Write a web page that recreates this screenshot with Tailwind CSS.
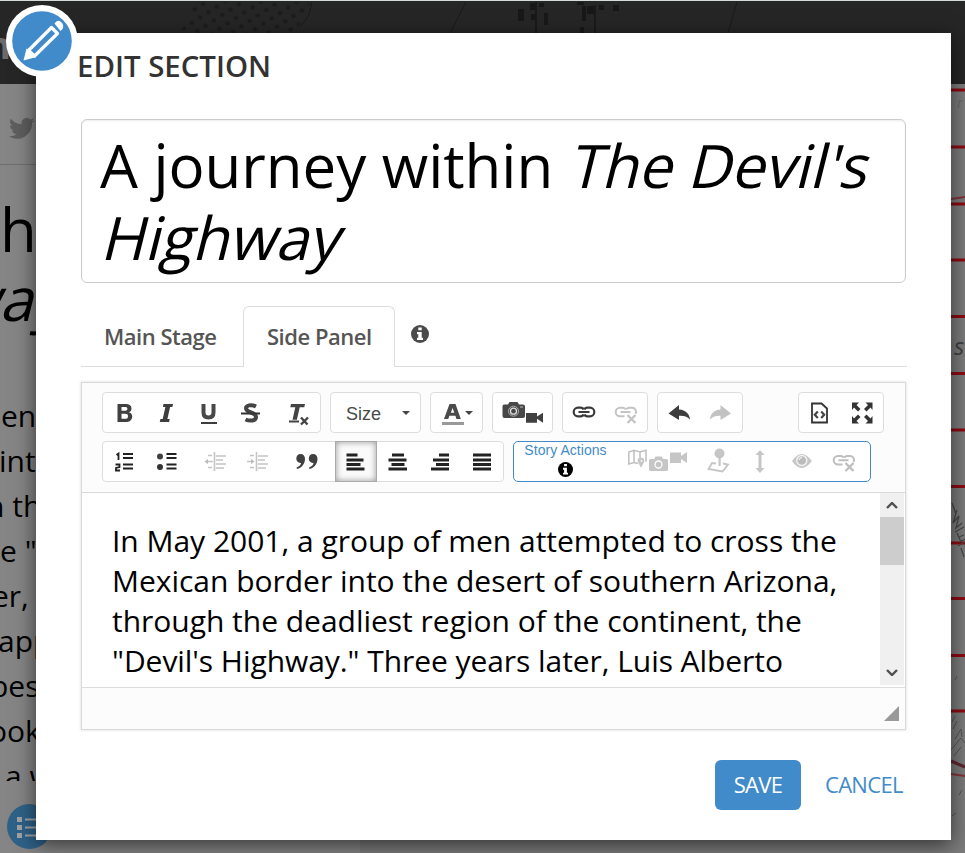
<!DOCTYPE html>
<html lang="en">
<head>
<meta charset="utf-8">
<title>Edit Section</title>
<script src="https://cdn.jsdelivr.net/npm/@tailwindcss/browser@4"></script>
</head>
<body class="relative h-[853px] w-[965px] overflow-hidden bg-[#858585] font-['Open_Sans',sans-serif]">

<!-- Dimmed page behind the dialog -->
<div class="flex h-[853px] flex-col overflow-hidden" aria-hidden="true">
  <header class="h-[84px] shrink-0 overflow-hidden border-t border-[#d5dcd9] bg-[#262626]">
    <svg class="block" width="965" height="83" viewBox="0 1 965 83">
      <defs><pattern id="dots" width="14" height="14" patternUnits="userSpaceOnUse" patternTransform="rotate(12)"><circle cx="3.5" cy="3.5" r="2.300" fill="#1c1c1c"/><circle cx="10.5" cy="10.5" r="2.300" fill="#1c1c1c"/></pattern></defs>
      <path d="M195 2H311L302 17L296 33H180Z" fill="url(#dots)"/>
      <g stroke="#1a1a1a" fill="none"><path d="M466 2L450 33M737 2L728 33M312 2L309 15L300 27"/><path stroke-width="2" d="M536 2V33M595 5V33"/></g>
      <path fill="#181818" d="M518 9h6v12h-6zM530 3h5v7h-5zM539 3h5v4h-5zM531 14h5v6h-5zM544 13h4v12h-4zM577 2h7v3h-7zM582 6h4v15h-4zM587 6h7v8h-7zM599 5h5v5h-5zM613 5h6v6h-6zM580 27h4v6h-4z"/>
    </svg>
    <div class="-mt-[72px] ml-[-14px] text-[38px] leading-[64px] font-bold text-[#6b6b6b]">n</div>
  </header>
  <div class="flex flex-1 overflow-hidden">
    <aside class="flex w-[360px] shrink-0 flex-col overflow-hidden bg-[#858585] text-black">
      <div class="flex h-[81px] shrink-0 items-center border-b border-[#6e6e6e] pl-[9px]">
        <svg width="26" height="26" viewBox="0 0 24 24" class="mt-[8px]"><path fill="#5e5e5e" d="M23.6 4.9a9.6 9.6 0 0 1-2.8.8 4.8 4.8 0 0 0 2.1-2.7 9.700 9.700 0 0 1-3 1.200 4.800 4.800 0 0 0-8.200 4.400A13.700 13.700 0 0 1 1.700 3.500a4.800 4.800 0 0 0 1.500 6.500 4.800 4.800 0 0 1-2.200-.6 4.800 4.800 0 0 0 3.900 4.800 4.800 4.800 0 0 1-2.200.1 4.800 4.800 0 0 0 4.500 3.300A9.700 9.700 0 0 1 0 19.600 13.700 13.700 0 0 0 21.200 7.400a9.800 9.800 0 0 0 2.400-2.500z"/></svg>
      </div>
      <div class="flex h-[229px] shrink-0 flex-col items-start pt-[29px] text-[60px] leading-[72px] whitespace-nowrap">
        <span class="-mt-px ml-0">h</span>
        <span class="-mt-[3px] ml-[-46px] inline-block origin-[0_75%] -skew-x-[14deg]">way</span>
      </div>
      <div class="-mt-px flex h-[388px] shrink-0 flex-col items-start overflow-hidden text-[30px] leading-[45px] whitespace-nowrap">
        <span class="ml-px">en</span><span class="ml-[-1px]">int</span><span class="ml-[-14px]">h th</span><span>e "</span><span class="ml-[-8px]">er,</span><span class="ml-[-2px]">app</span><span class="ml-[-10px]">bes</span><span class="ml-[-11px]">ook</span><span class="ml-[5px]">a w</span>
      </div>
      <svg class="mt-[23px] ml-[7px] shrink-0" width="46" height="46" viewBox="0 0 46 46"><circle cx="22.500" cy="22.500" r="22.500" fill="#2f6288"/><path fill="#a1a4a6" d="M10 13h5v5h-5zM10 21h5v5h-5zM10 29h5v5h-5zM18 14.500h17v2H18zM18 22.500h17v2H18zM18 30.500h17v2H18z"/></svg>
    </aside>
    <div class="flex flex-1 justify-end bg-[#7c7c7c]">
      <svg width="45" height="769" viewBox="920 84 45 769">
        <path fill="#7c7c7c" d="M920 84h45v769h-45z"/>
        <path stroke="#8c0b13" stroke-width="3" fill="none" d="M920 90h45M920 147h45M920 204h45M920 260h45M920 316.500h45M920 373.500h45M920 430h45M920 486.500h45M920 543h45M920 598.500h45M920 655.500h45M920 711h45"/>
        <path stroke="#82343b" stroke-width="2" fill="none" d="M951 199l14-2M951 774q7 1 14 2"/>
        <path stroke="#5d2730" stroke-width="3" d="M951 761l14 6"/>
        <path stroke="#484848" stroke-width="1.300" fill="none" d="M952 503l4 11M957 510l-4 13 6-7-3 12 6-5M955 532l9-5M957 533l4 9M959 537l5-2M961 541l5-2M958 546l7-4M961 548l3 9"/>
        <path stroke="#555" fill="none" d="M952 722l3-6M953 729l4-8M955 739l6-10 1 8M951 750l10-12 4 5M954 756l7-9M955 680l2-4M952 816l4-3M959 795l3-5"/>
        <text x="954" y="355" font-size="24" font-style="italic" fill="#404040" font-family="Open Sans">s</text>
        <text x="957" y="108" font-size="15" font-style="italic" fill="#626c70" font-family="Open Sans">r</text>
      </svg>
    </div>
  </div>
</div>

<!-- Dialog -->
<main class="absolute top-[33px] left-[36px] flex h-[807px] w-[915px] flex-col bg-white pr-[45px] pl-[45px] shadow-[0_5px_20px_rgba(0,0,0,0.6)]">
  <h1 class="-ml-[4px] h-[86px] shrink-0 pt-[15px] text-[29.4px] leading-[37px] font-semibold whitespace-nowrap text-[#333]">EDIT SECTION</h1>

  <div class="h-[164px] w-[825px] shrink-0 rounded-[6px] border border-[#ccc] pt-[9px] pl-[18px] text-[60px] leading-[72px] tracking-[-0.05px] whitespace-nowrap text-black shadow-[inset_0_1px_2px_rgba(0,0,0,0.08)]">
    <div>A journey within <span class="inline-block origin-[0_75%] -skew-x-[14deg]">The Devil's</span></div>
    <div class="pl-px"><span class="inline-block origin-[0_75%] -skew-x-[14deg]">Highway</span></div>
  </div>

  <!-- Tabs -->
  <nav class="mt-[23px] flex h-[61px] w-[826px] shrink-0 border-b border-[#ddd] text-[22px] leading-[60px] font-semibold tracking-[-0.48px] text-[#555]">
    <div class="w-[162px] pl-[23px] whitespace-nowrap">Main Stage</div>
    <div class="h-[61px] w-[152px] rounded-t-[6px] border border-b-0 border-[#ddd] bg-white pl-[23px] leading-[58px] whitespace-nowrap">Side Panel</div>
    <svg class="mt-[19px] ml-[16px]" width="18" height="18" viewBox="0 0 18 18"><circle cx="9" cy="9" r="9" fill="#4b4b4b"/><path fill="#fff" d="M7.300 2.500h3.400v2.700H7.300zM6 7h4.700v5.800H12V15H6v-2.200h1.300V9.200H6z"/></svg>
  </nav>

  <!-- Editor -->
  <section class="mt-[15px] flex h-[348px] w-[825px] shrink-0 flex-col border border-[#d9d9d9] bg-white shadow-[0_0_3px_rgba(0,0,0,0.15)]">
    <div class="flex h-[110px] shrink-0 flex-col gap-[8px] border-b border-[#d9d9d9] bg-[#fcfcfc] pt-[9px] pl-[20px] font-['Liberation_Sans',sans-serif]">
      <div class="flex gap-[9px]">
        <div class="flex h-[41px] w-[219px] rounded-[4px] border border-[#ddd] bg-white">
          <svg width="217" height="39" viewBox="103 393 217 39">
            <path fill="#404040" fill-rule="evenodd" d="M117.500 404h8c4 0 6 1.500 6 4.500 0 2-1 3.300-2.800 3.800 2.300.5 3.500 2 3.500 4.200 0 3.500-2.500 5.500-6.500 5.500h-8.200zM121.500 407v3.800h3.300c1.700 0 2.600-.6 2.600-2s-.9-1.800-2.700-1.800zM121.500 413.800v5h3.600c1.900 0 2.900-.8 2.900-2.600 0-1.600-1-2.400-3-2.400z"/>
            <path fill="#3d3d3d" d="M163.500 404h9.500l-.6 3h-2.300l-2.700 12h2.300l-.6 3h-9.300l.6-3h2.300l2.700-12h-2.500z"/>
            <path fill="none" stroke="#484848" stroke-width="4" d="M203.500 404v8.500q0 5 5 5t5-5V404"/>
            <path fill="#3d3d3d" d="M201 422h16v2h-16z"/>
            <path fill="none" stroke="#444" stroke-width="4" d="M256 406.500c-5-2.500-10-1-10 1.800 0 5 10 3.400 10 8.600 0 4-6 4.500-10.500 2.600"/>
            <path fill="#333" d="M241 412.500h19v2h-19z"/>
            <path fill="#444" d="M291 404h14l-.7 3.200h-4.600l-2.800 12.500h-4.400l2.800-12.500h-5zM289 420.500h10v2h-10z"/>
            <path fill="none" stroke="#444" stroke-width="2.400" d="M301 417.500l6.500 7M308 417.500l-7 7"/>
          </svg>
        </div>
        <div class="flex h-[41px] w-[91px] items-center justify-between rounded-[4px] border border-[#ddd] bg-white pr-[10px] pl-[15px] text-[18px] text-[#484848]"><span class="pt-[3px]">Size</span>
          <svg width="8" height="4" viewBox="0 0 8 4"><path fill="#444" d="M0 0h8L4 4z"/></svg></div>
        <div class="flex h-[41px] w-[53px] rounded-[4px] border border-[#ddd] bg-white">
          <svg width="51" height="39" viewBox="431 393 51 39"><path fill="#4b4b4b" fill-rule="evenodd" d="M449.500 404h6l5.300 15h-4.400l-1-3.200h-6l-1.200 3.200h-4.200zM452.600 408l-1.800 4.800h3.500z"/><path fill="#999" d="M442 422h22v3h-22z"/><path fill="#444" d="M465 411h8l-4 4z"/></svg>
        </div>
        <div class="flex h-[41px] w-[61px] rounded-[4px] border border-[#ddd] bg-white">
          <svg width="59" height="39" viewBox="493 393 59 39"><path fill="#474747" d="M504 404.500h4l1.500-2.500h8l1.500 2.500h4q2 0 2 2v9.500q0 2-2 2h-18.500q-2 0-2-2v-9.500q0-2 1.500-2z"/><circle cx="513.500" cy="411.200" r="5" fill="none" stroke="#aaa" stroke-width="1"/><circle cx="513.500" cy="411.200" r="3" fill="none" stroke="#ddd" stroke-width="1.300"/><path stroke="#bbb" d="M520 407h3"/><path fill="#404040" d="M526 413h11v3.500l6-3.800v10l-6-4v4h-11z"/></svg>
        </div>
        <div class="flex h-[41px] w-[86px] rounded-[4px] border border-[#ddd] bg-white">
          <svg width="84" height="39" viewBox="563 393 84 39">
            <g fill="none" stroke="#3a3a3a" stroke-width="2.200"><path d="M583.500 409.600q-.5-1.900-3-1.900H578a4.100 4.100 0 0 0 0 8.600h2.500q2.500 0 3-1.900M584.500 409.600q.5-1.900 3-1.900h2.500a4.100 4.100 0 0 1 0 8.600h-2.500q-2.500 0-3-1.900M578.500 412h11"/></g>
            <g fill="none" stroke="#c4c4c4" stroke-width="2"><path d="M625.500 409.600q-.5-1.900-3-1.900H620a4.100 4.100 0 0 0 0 8.600h4.500M626.500 409.600q.5-1.900 3-1.900h2.500a4 4 0 0 1 3.500 6M620.500 412h10"/><path stroke-width="2.400" d="M627.500 415l8 8M635.500 415l-8 8"/></g>
          </svg>
        </div>
        <div class="flex h-[41px] w-[86px] rounded-[4px] border border-[#ddd] bg-white">
          <svg width="84" height="39" viewBox="658 393 84 39"><path fill="#3d3d3d" d="M668.500 413.500l10.500-8.500v4.500c7 .5 10.500 4.500 11 10-3-3.200-6-4-11-3.800v4.300z"/><path fill="#c2c2c2" d="M731 413.500l-10.500-8.500v4.500c-7 .5-10 4.500-10.500 10 3-3.200 6-4 10.500-3.800v4.300z"/></svg>
        </div>
        <div class="ml-[46px] flex h-[41px] w-[86px] rounded-[4px] border border-[#ddd] bg-white">
          <svg width="84" height="39" viewBox="799 393 84 39"><path fill="#fff" stroke="#333" stroke-width="1.800" d="M812 403.500h9.500l5.500 5v14h-15z"/><path fill="none" stroke="#444" stroke-width="2.200" d="M817.800 411.500l-3 3.200 3 3.300M821.200 411.500l3 3.200-3 3.300"/>
            <g fill="#333"><path d="M852 402.500h7l-2.500 2.500 4 4-2.500 2.500-4-4-2 2.500zM872.500 402.500h-7l2.500 2.500-4 4 2.500 2.500 4-4 2 2.500zM852 423.500h7l-2.500-2.500 4-4-2.500-2.500-4 4-2-2.500zM872.500 423.500h-7l2.500-2.500-4-4 2.500-2.500 4 4 2-2.500z"/></g></svg>
        </div>
      </div>
      <div class="flex gap-[9px]">
        <div class="flex h-[41px] w-[402px] rounded-[4px] border border-[#ddd] bg-white">
          <svg width="232" height="39" viewBox="103 442 232 39">
            <path stroke="#222" stroke-width="1.800" fill="none" d="M123 454h10M123 458h10M123 464.500h10M123 468.500h10M166.500 454h10M166.500 458h10M166.500 464.500h10M166.500 468.500h10M116.500 455l2-1.500V460M115.500 464.500h4v2.500l-3.500 1v2.500h4"/>
            <circle cx="160" cy="456.500" r="3" fill="#404040"/><circle cx="160" cy="467" r="3" fill="#333"/>
            <g stroke="#c4c4c4" stroke-width="1.300" fill="none"><path stroke-width="1.600" d="M214.500 452v19M256.500 452v19"/><path d="M216 456h10M216 460h7M216 464h10M216 468h8M208 455.500h4M208 467.500h4M258 456h10M258 460h7M258 464h10M258 468h8M250 455.500h4M250 467.500h4"/><path stroke-width="1.500" d="M206 461.500h7M247 461.500h6"/></g>
            <path fill="#bbb" d="M204.500 461.500l3.500-2.500v5zM254.500 461.500l-3.500-2.500v5z"/>
            <path fill="#404040" d="M300.500 454c3 0 4.500 2 4.500 5 0 5-3.500 9-8 10l-.5-1.500c3-1 4.500-3 4.500-4.500-3 .3-4.700-2-4.700-4.400 0-2.600 1.700-4.600 4.200-4.600zM313 454c3 0 4.500 2 4.500 5 0 5-3.500 9-8 10l-.5-1.500c3-1 4.500-3 4.500-4.500-3 .3-4.700-2-4.700-4.400 0-2.600 1.700-4.600 4.200-4.600z"/>
          </svg>
          <div class="-my-px h-[41px] w-[42px] border border-[#aaa] bg-[#fafafa] shadow-[inset_0_0_6px_rgba(0,0,0,0.4)]"><svg width="40" height="39" viewBox="336 442 40 39"><path stroke="#222" stroke-width="2.800" d="M346.500 455h11M346.500 460h17M346.500 464.500h14M346.500 469h18"/></svg></div>
          <svg width="126" height="39" viewBox="377 442 126 39"><path stroke="#222" stroke-width="2.800" d="M392 455h12M388.500 460h18M391.500 464.500h13M388.500 469h18.500M439 455h10M433 460h16M436 464.500h13M431 469h18M473 455h18M473 460h18M473 464.500h18M473 469h18"/></svg>
        </div>
        <div class="flex h-[41px] w-[358px] rounded-[5px] border border-[#428bca] bg-white">
          <div class="flex w-[102px] flex-col items-center pl-px text-[14px] leading-[16px] tracking-[0.05px] text-[#428bca]">
            <span class="whitespace-nowrap">Story Actions</span>
            <svg class="mt-[4px] mr-px" width="15" height="15" viewBox="0 0 18 18"><circle cx="9" cy="9" r="9" fill="#000"/><path fill="#fff" d="M7.300 2.500h3.400v2.700H7.300zM6 7h4.700v5.800H12V15H6v-2.200h1.300V9.200H6z"/></svg>
          </div>
          <svg width="254" height="39" viewBox="616 442 254 39" fill="#c6c6c6">
            <path fill="none" stroke="#c0c0c0" stroke-width="1.500" d="M638 463.500l-4-1-5.200 1.500v-12l5.200-1.800 6 1.800 6-1.800v11.500M634 450.500v12M640 452v11"/><path fill-rule="evenodd" d="M641 457.500c3 0 4.300 3 2.700 5.200l-2.700 5-2.700-5c-1.600-2.200-.3-5.200 2.700-5.200zM641 459.700a1.200 1.200 0 1 0 .1 0z"/>
            <path d="M650.500 459h3.500l1.500-2.500h6l1.500 2.500h3.500q1.500 0 1.500 1.500v9q0 1.500-1.500 1.500h-16q-1.500 0-1.500-1.500v-9q0-1.500 1.500-1.500z"/><circle cx="658.500" cy="464.500" r="3.500" fill="none" stroke="#fff" stroke-width="1.300"/>
            <path d="M670 452.500h11v3.500l6-4v11l-6-4v4h-11z"/>
            <circle cx="719.500" cy="453.500" r="5"/><path d="M718.500 457h2.200v9h-2.200z"/><path fill="none" stroke="#c6c6c6" stroke-width="1.800" d="M716 463.500l-4-.5-3.500 6 14 2.500 5.500-7-5-1"/>
            <path d="M760 450l4.500 5h-3v13h3l-4.500 5-4.500-5h3v-13h-3z"/>
            <path d="M792 461q9.500-14 19.800 0-10.300 14-19.800 0z"/><circle cx="801.800" cy="460.500" r="5" fill="#bcbcbc" stroke="#f3f3f3" stroke-width="1.400"/><path d="M799 460q.5-2.500 3-2.500" fill="none" stroke="#fff"/>
            <g fill="none" stroke="#bebebe" stroke-width="2"><path d="M843.500 457.800q-.5-1.900-3-1.900H838a4.100 4.100 0 0 0 0 8.600h4.500M844.500 457.800q.5-1.900 3-1.900h2.500a4 4 0 0 1 3.500 6M838.500 460.200h10"/><path stroke-width="2.400" d="M845.500 463l8 8M853.500 463l-8 8"/></g>
          </svg>
        </div>
      </div>
    </div>
    <div class="flex h-[195px] shrink-0 justify-between overflow-hidden border-b border-[#ddd] bg-white">
      <div class="pt-[28px] pl-[30px] text-[30px] leading-[40px] tracking-[-0.02px] whitespace-nowrap text-black">
        <div>In May 2001, a group of men attempted to cross the</div>
        <div>Mexican border into the desert of southern Arizona,</div>
        <div>through the deadliest region of the continent, the</div>
        <div class="tracking-[-0.06px]">"Devil's Highway." Three years later, Luis Alberto</div>
      </div>
      <div class="mr-px flex h-[192px] w-[24px] flex-col items-center bg-[#f0f0f0]">
        <svg class="mt-[9px] mb-[8px] shrink-0" width="12" height="7" viewBox="0 0 12 7"><path fill="none" stroke="#505050" stroke-width="2.400" d="M1 6l5-5 5 5"/></svg>
        <div class="h-[48px] w-[24px] bg-[#cdcdcd]"></div>
        <svg class="mt-auto mb-[9px] shrink-0" width="12" height="7" viewBox="0 0 12 7"><path fill="none" stroke="#505050" stroke-width="2.400" d="M1 1l5 5 5-5"/></svg>
      </div>
    </div>
    <div class="flex flex-1 items-end justify-end bg-[#fcfcfc] pr-[6px] pb-[8px]"><svg width="15" height="15" viewBox="0 0 15 15"><path fill="#999" d="M15 0v15H0z"/></svg></div>
  </section>

  <div class="mt-[30px] flex h-[50px] w-[825px] shrink-0 items-center justify-end text-[22px] tracking-[-0.7px] text-[#428bca]">
    <button class="h-[50px] w-[86px] rounded-[6px] bg-[#428bca] pb-[2px] text-white">SAVE</button>
    <button class="ml-[24px] w-[78px] pb-[2px] text-left whitespace-nowrap">CANCEL</button>
    <span class="w-[3px]"></span>
  </div>
</main>

<!-- Edit badge on the dialog corner -->
<svg class="absolute top-[5px] left-[6px]" width="72" height="72" viewBox="0 0 72 72"><circle cx="36" cy="36" r="36" fill="#fff"/><circle cx="36" cy="36" r="29.800" fill="#428bca"/><path fill="none" stroke="#fff" stroke-width="3.200" stroke-linejoin="round" d="M22.500 45.500L45.500 22.500l6 6L28.500 51z"/><path fill="#fff" d="M20.500 43.500l10 8.500-13 3.500zM48.500 18.500q3-4.500 6.500-1.500t1.500 7l-2 2z"/></svg>
</body>
</html>
